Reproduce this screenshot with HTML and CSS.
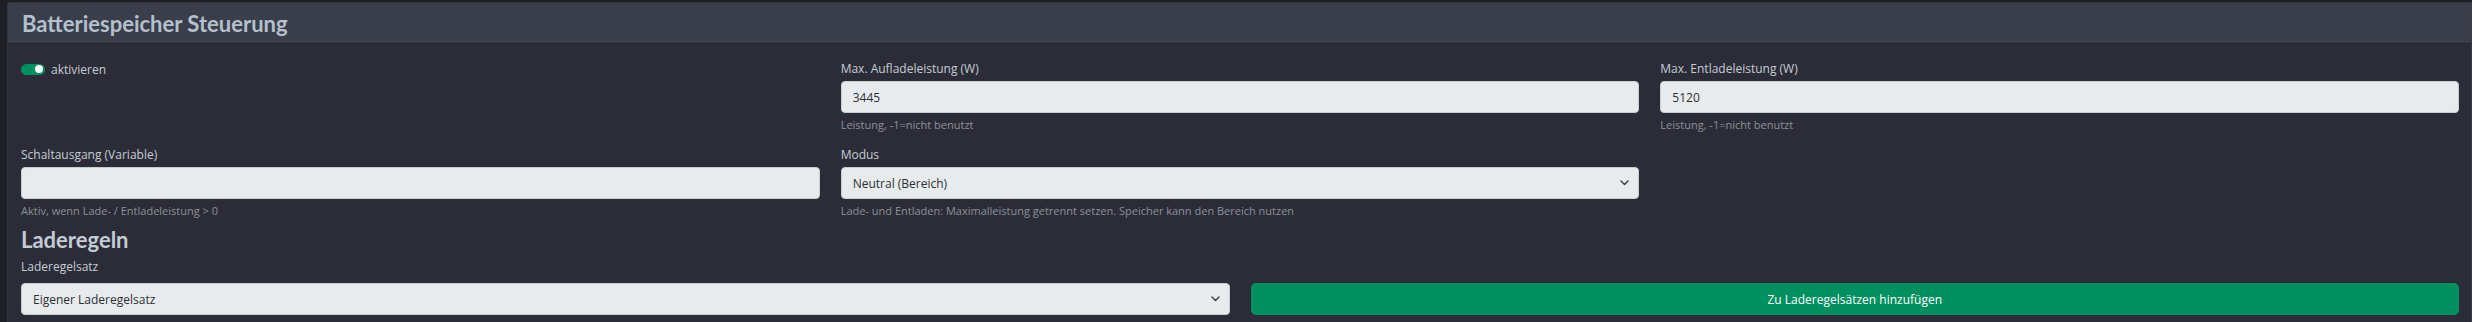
FILE: index.html
```html
<!DOCTYPE html>
<html lang="de">
<head>
    <meta charset="UTF-8">
    <meta name="viewport" content="width=device-width, initial-scale=1.0">
    <title>Batteriespeicher Steuerung</title>
    <link rel="stylesheet" href="styles.css">
</head>
<body>
    <div class="card">
        <div class="card-header">Batteriespeicher Steuerung</div>
        <div class="card-body">
            <div class="form-grid">
                <div class="field">
                    <div class="switch-row">
                        <span class="switch"><span class="knob"></span></span>
                        <span class="switch-label">aktivieren</span>
                    </div>
                </div>
                <div class="field">
                    <label class="form-label">Max. Aufladeleistung (W)</label>
                    <div class="form-control">3445</div>
                    <div class="form-text">Leistung, -1=nicht benutzt</div>
                </div>
                <div class="field">
                    <label class="form-label">Max. Entladeleistung (W)</label>
                    <div class="form-control">5120</div>
                    <div class="form-text">Leistung, -1=nicht benutzt</div>
                </div>

                <div class="field">
                    <label class="form-label">Schaltausgang (Variable)</label>
                    <div class="form-control"></div>
                    <div class="form-text">Aktiv, wenn Lade- / Entladeleistung &gt; 0</div>
                </div>
                <div class="field">
                    <label class="form-label">Modus</label>
                    <div class="form-control form-select">
                        <span>Neutral (Bereich)</span>
                        <svg class="chevron" width="9" height="6" viewBox="0 0 9 6"><path d="M1 1l3.5 3.5L8 1" fill="none" stroke="#343a40" stroke-width="1.4" stroke-linecap="round" stroke-linejoin="round"/></svg>
                    </div>
                    <div class="form-text">Lade- und Entladen: Maximalleistung getrennt setzen. Speicher kann den Bereich nutzen</div>
                </div>
                <div class="field"></div>
            </div>

            <h4 class="section-title">Laderegeln</h4>
            <label class="form-label label-set">Laderegelsatz</label>
            <div class="rules-row">
                <div class="form-control form-select">
                    <span>Eigener Laderegelsatz</span>
                    <svg class="chevron" width="9" height="6" viewBox="0 0 9 6"><path d="M1 1l3.5 3.5L8 1" fill="none" stroke="#343a40" stroke-width="1.4" stroke-linecap="round" stroke-linejoin="round"/></svg>
                </div>
                <button class="btn-add">Zu Laderegelsätzen hinzufügen</button>
            </div>
        </div>
    </div>
</body>
</html>
```

FILE: styles.css
```css
body {
    margin: 0;
    padding: 2px 0 0 7px;
    background-color: #1e1f24;
    font-family: "Open Sans", "Noto Sans", sans-serif;
    font-size: 12px;
    color: #c6ccd4;
    overflow: hidden;
}

.card {
    background-color: #2c2c38;
    border: 1px solid #34353f;
    border-right: 1px solid #3a3b46;
    border-radius: 4px 0 0 0;
    min-height: 400px;
}

.card-header {
    height: 40px;
    display: flex;
    align-items: center;
    padding-left: 14px;
    background-color: #3a3e4a;
    border-bottom: 1px solid #24252c;
    color: #b4c0cc;
    font-family: Lato, "Open Sans", sans-serif;
    font-size: 22px;
    font-weight: 700;
}

.card-body {
    padding: 16px 12px 0 13px;
}

.form-grid {
    display: grid;
    grid-template-columns: repeat(3, 1fr);
    column-gap: 21px;
    row-gap: 13px;
}

.field {
    display: flex;
    flex-direction: column;
}

.switch-row {
    display: flex;
    align-items: center;
    height: 18px;
    gap: 6px;
}

.switch {
    width: 24px;
    height: 11px;
    border-radius: 6px;
    background-color: #00905e;
    display: flex;
    align-items: center;
    justify-content: flex-end;
    padding-right: 2px;
    box-sizing: border-box;
}

.knob {
    width: 8px;
    height: 8px;
    border-radius: 50%;
    background-color: #ffffff;
}

.switch-label {
    color: #c6ccd4;
}

.form-label {
    display: block;
    line-height: 18px;
    margin-bottom: 3px;
    color: #c6ccd4;
}

.form-control {
    height: 32px;
    box-sizing: border-box;
    background-color: #e8ebee;
    border: 1px solid #c9ced4;
    border-radius: 4px;
    padding: 0 11px;
    display: flex;
    align-items: center;
    color: #2b2f33;
}

.form-select {
    justify-content: space-between;
    padding-right: 9px;
}

.chevron {
    display: block;
}

.form-text {
    margin-top: 4px;
    line-height: 16px;
    font-size: 11px;
    color: #8b9199;
}

.section-title {
    margin: 8px 0 0 0;
    font-family: Lato, "Open Sans", sans-serif;
    font-size: 22px;
    line-height: 26px;
    font-weight: 700;
    color: #c3cbd5;
}

.label-set {
    margin-top: 5px;
    margin-bottom: 7px;
}

.rules-row {
    display: grid;
    grid-template-columns: 1fr 1fr;
    column-gap: 21px;
}

.btn-add {
    height: 32px;
    border: none;
    border-radius: 5px;
    background-color: #008f5e;
    color: #ffffff;
    font-family: inherit;
    font-size: 12px;
}
```
